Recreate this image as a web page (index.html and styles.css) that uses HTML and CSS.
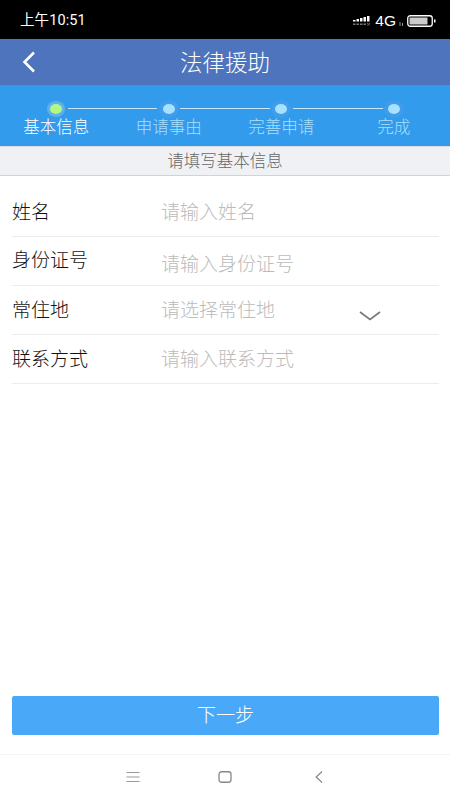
FILE: index.html
```html
<!DOCTYPE html>
<html lang="zh">
<head>
<meta charset="utf-8">
<title>法律援助</title>
<link rel="stylesheet" href="styles.css">
</head>
<body>
<div class="screen">
  <div class="status">
    <span class="time">上午10:51</span>
    <div class="status-right">
      <svg class="signal" width="18" height="10" viewBox="0 0 18 10">
        <g fill="#fff">
          <rect x="0" y="4" width="2.500" height="1.500"/><rect x="3.500" y="3" width="2.500" height="2.500"/><rect x="7" y="2" width="2.500" height="3.500"/><rect x="10.500" y="1" width="2.500" height="4.500"/><rect x="14" y="0" width="2.500" height="5.500"/>
        </g>
        <g fill="#777">
          <rect x="0" y="7.500" width="2.500" height="1.500"/><rect x="3.500" y="7.500" width="2.500" height="1.500"/><rect x="7" y="7.500" width="2.500" height="1.500"/><rect x="10.500" y="7.500" width="2.500" height="1.500"/>
        </g>
        <path d="M14 7l3 2.500M17 7l-3 2.500" stroke="#888" stroke-width=".7"/>
      </svg>
      <span class="net">4G</span>
      <svg class="arrows" width="5" height="6" viewBox="0 0 5 6"><path d="M1 1v4M3.500 2v3" stroke="#999" stroke-width="1"/></svg>
      <svg class="battery" width="29" height="12" viewBox="0 0 29 12">
        <rect x=".75" y=".75" width="24.500" height="10.500" rx="2.500" fill="none" stroke="#fff" stroke-width="1.300"/>
        <rect x="2.500" y="2.500" width="18" height="7" rx=".5" fill="#ccc"/>
        <rect x="27" y="4.500" width="1.500" height="3" fill="#fff"/>
      </svg>
    </div>
  </div>

  <header class="nav">
    <svg class="back" width="16" height="24" viewBox="0 0 16 24"><path d="M13 2.500L3.500 12l9.500 9.500" fill="none" stroke="#fff" stroke-width="2.600"/></svg>
    <h1 class="title">法律援助</h1>
  </header>

  <div class="steps">
    <div class="track">
      <span class="dot dot-on"></span>
      <span class="line"></span>
      <span class="dot"></span>
      <span class="line"></span>
      <span class="dot"></span>
      <span class="line"></span>
      <span class="dot"></span>
    </div>
    <div class="labels">
      <span class="label label-on">基本信息</span>
      <span class="label">申请事由</span>
      <span class="label">完善申请</span>
      <span class="label">完成</span>
    </div>
  </div>

  <div class="hint">请填写基本信息</div>

  <form class="form">
    <div class="row"><span class="key">姓名</span><span class="ph">请输入姓名</span></div>
    <div class="row row-low"><span class="key">身份证号</span><span class="ph">请输入身份证号</span></div>
    <div class="row row-select"><span class="key">常住地</span><span class="ph">请选择常住地</span>
      <svg class="chev" width="24" height="12" viewBox="0 0 24 12"><path d="M2 2l10 7.500L22 2" fill="none" stroke="#777" stroke-width="1.600"/></svg>
    </div>
    <div class="row"><span class="key">联系方式</span><span class="ph">请输入联系方式</span></div>
  </form>

  <div class="spacer"></div>

  <button class="next" type="button">下一步</button>

  <nav class="softkeys">
    <svg class="soft-menu" width="14" height="12" viewBox="0 0 14 12"><path d="M.5 1.500h13M.5 6h13M.5 10.500h13" stroke="#999" stroke-width="1.200"/></svg>
    <svg class="soft-home" width="14" height="12" viewBox="0 0 14 12"><rect x="1" y=".75" width="12" height="10.500" rx="2.500" fill="none" stroke="#888" stroke-width="1.300"/></svg>
    <svg class="soft-back" width="8" height="12" viewBox="0 0 8 12"><path d="M7 .5L1.200 6 7 11.500" fill="none" stroke="#888" stroke-width="1.200"/></svg>
  </nav>
</div>
</body>
</html>
```
FILE: styles.css
```css
* { box-sizing: border-box; }
html, body { margin: 0; padding: 0; }
body { font-family: "Noto Sans CJK SC", "Liberation Sans", sans-serif; font-weight: 300; background: #fff; }
.screen { width: 450px; height: 800px; display: flex; flex-direction: column; overflow: hidden; background: #fff; }

.status { height: 39px; flex: none; background: #000; color: #fff; display: flex; align-items: center; justify-content: space-between; padding: 3px 14px 0 20px; }
.time { font-family: "Roboto", "Noto Sans CJK SC", sans-serif; font-size: 14.500px; line-height: 1; font-weight: 400; letter-spacing: .1px; }
.status-right { display: flex; align-items: center; gap: 3px; }
.signal { margin-right: 1px; }
.net { font-family: "Liberation Sans", sans-serif; font-size: 15.500px; font-weight: 400; line-height: 1; }
.arrows { margin-top: 5px; }
.battery { display: block; }

.nav { height: 46px; flex: none; background: #4d74bc; display: flex; align-items: center; position: relative; padding-left: 21px; }
.back { display: block; }
.title { position: absolute; left: 0; right: 0; top: -1px; margin: 0; text-align: center; font-size: 22.500px; font-weight: 300; line-height: 46px; color: #fff; }

.steps { height: 62px; flex: none; background: #339bec; display: flex; flex-direction: column; padding-top: 14px; border-bottom: 1px solid #d9dbe0; }
.track { display: flex; align-items: center; height: 19px; padding: 0 50px; }
.dot { width: 12px; height: 10px; border-radius: 50%; background: #a6e2ff; flex: none; box-shadow: 0 0 0 4px rgba(77, 160, 232, .5); }
.dot-on { background: #b0fa84; box-shadow: 0 0 0 3px #62b0ea; }
.line { flex: 1; height: 1.500px; background: #c8e6fb; margin: 0 5.500px; }
.labels { display: grid; grid-template-columns: repeat(4, 112.500px); margin-top: -1px; }
.label { text-align: center; font-size: 16.500px; line-height: 18px; color: #a8defc; }
.label-on { color: #fff; }

.hint { height: 29px; flex: none; background: #f0f1f5; border-bottom: 1px solid #d2d3d8; text-align: center; font-size: 16.500px; line-height: 27px; color: #666; }

.form { padding: 12px 11px 0 12px; flex: none; }
.row { height: 49px; display: flex; align-items: center; border-bottom: 1px solid #ececec; position: relative; }
.key { width: 150px; flex: none; font-size: 19px; color: #111; line-height: 1; margin-bottom: 3px; }
.ph { font-size: 19px; color: #bbb; line-height: 1; margin-bottom: 3px; margin-left: -1px; }
.row-low .ph { margin-top: 3px; margin-bottom: 0; }
.row-low .key { margin-bottom: 5px; }
.row-select .key, .row-select .ph { margin-bottom: 4px; }
.chev { position: absolute; left: 346px; top: 24px; }

.spacer { flex: 1; }

.next { flex: none; display: block; width: 427px; height: 39px; margin: 0 0 19px 12px; border: 0; border-radius: 2px; background: #49a9f8; color: #fff; font-family: inherit; font-weight: 300; font-size: 19px; padding: 0 0 4px; }

.softkeys { height: 46px; flex: none; border-top: 1px solid #f3f3f3; display: flex; align-items: center; padding: 0 0 2px 126px; }
.softkeys svg { display: block; }
.soft-home { margin-left: 78px; }
.soft-back { margin-left: 83px; }
```
